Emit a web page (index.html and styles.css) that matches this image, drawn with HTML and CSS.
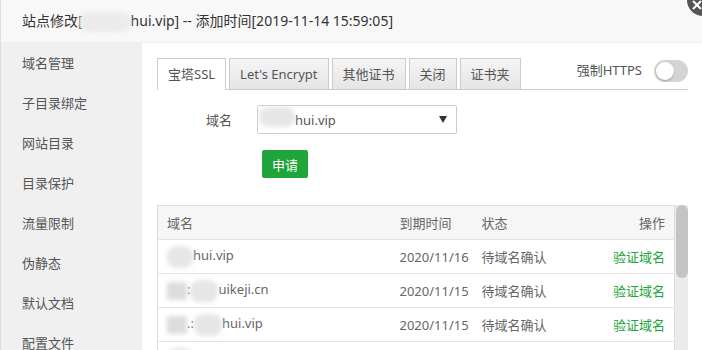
FILE: index.html
```html
<!DOCTYPE html>
<html lang="zh-CN">
<head>
  <meta charset="UTF-8">
  <title>站点修改</title>
  <link rel="stylesheet" href="styles.css">
</head>
<body>
  <div class="layer">
    <div class="layer-title">站点修改[<span class="blur blur-title"></span>hui.vip] -- 添加时间[2019-11-14 15:59:05]</div>
    <a class="layer-close">
      <svg width="12" height="12" viewBox="0 0 12 12"><path d="M2 2L10 10M10 2L2 10" stroke="#fff" stroke-width="2"/></svg>
    </a>
    <div class="layer-body">
      <ul class="side-menu">
        <li>域名管理</li>
        <li>子目录绑定</li>
        <li>网站目录</li>
        <li>目录保护</li>
        <li>流量限制</li>
        <li>伪静态</li>
        <li>默认文档</li>
        <li>配置文件</li>
      </ul>
      <div class="main">
        <div class="tab-bar">
          <div class="tabs">
            <span class="tab on">宝塔SSL</span>
            <span class="tab">Let's Encrypt</span>
            <span class="tab">其他证书</span>
            <span class="tab">关闭</span>
            <span class="tab">证书夹</span>
          </div>
          <div class="force-https">
            <span>强制HTTPS</span>
            <span class="switch"><i></i></span>
          </div>
        </div>

        <div class="form-line">
          <label>域名</label>
          <div class="select-box">
            <span><span class="blur blur-select"></span>hui.vip</span>
            <span class="arrow"></span>
          </div>
        </div>
        <div class="form-line btn-line">
          <button class="btn-apply">申请</button>
        </div>

        <div class="table-wrap">
          <div class="table-box">
            <table class="cert-table">
              <colgroup>
                <col class="col-name">
                <col class="col-date">
                <col class="col-status">
                <col>
              </colgroup>
              <thead>
                <tr><th>域名</th><th>到期时间</th><th>状态</th><th class="op">操作</th></tr>
              </thead>
              <tbody>
                <tr><td><span class="blur blur-a"></span>hui.vip</td><td>2020/11/16</td><td>待域名确认</td><td class="op"><a>验证域名</a></td></tr>
                <tr><td><span class="blur blur-b"></span>:<span class="blur blur-c"></span>uikeji.cn</td><td>2020/11/15</td><td>待域名确认</td><td class="op"><a>验证域名</a></td></tr>
                <tr><td><span class="blur blur-b"></span>.:<span class="blur blur-c"></span>hui.vip</td><td>2020/11/15</td><td>待域名确认</td><td class="op"><a>验证域名</a></td></tr>
                <tr><td><span class="blur blur-a"></span>hui.vip</td><td>2020/11/14</td><td>待域名确认</td><td class="op"><a>验证域名</a></td></tr>
              </tbody>
            </table>
          </div>
          <div class="scrollbar"><div class="thumb"></div></div>
        </div>
      </div>
    </div>
  </div>
</body>
</html>
```

FILE: styles.css
```css
* {
  box-sizing: border-box;
}
html, body {
  margin: 0;
  height: 100%;
  overflow: hidden;
}
body {
  font-family: "Noto Sans", "Noto Sans CJK SC", sans-serif;
  font-size: 13px;
  color: #555;
  background: #fff;
}
.layer {
  position: relative;
  height: 100vh;
  display: flex;
  flex-direction: column;
  border-left: 1px solid #ddd;
}
.layer-title {
  height: 43px;
  line-height: 42px;
  padding-left: 21px;
  font-size: 14px;
  color: #333;
  background: #f8f8f8;
  border-bottom: 1px solid #eee;
}
.layer-close {
  position: absolute;
  left: 686px;
  top: -16px;
  width: 32px;
  height: 32px;
  border-radius: 50%;
  background: #555;
  display: flex;
  align-items: flex-end;
  justify-content: flex-start;
  padding: 0 0 5px 4px;
}
.blur {
  display: inline-block;
  vertical-align: middle;
  background: #e6e6e6;
  border-radius: 9px;
  filter: blur(2px);
}
.blur-title {
  width: 52px;
  height: 20px;
  margin-left: -4px;
  background: #ebebeb;
}
.blur-select {
  width: 36px;
  height: 20px;
  margin: -8px 0 0 -2px;
}
.blur-a {
  width: 26px;
  height: 22px;
}
.blur-b {
  width: 20px;
  height: 18px;
  background: #ddd;
  border-radius: 2px;
}
.blur-c {
  width: 28px;
  height: 22px;
}

.layer-body {
  flex: 1;
  min-height: 0;
  display: flex;
}
.side-menu {
  width: 141px;
  margin: 0;
  padding: 0;
  list-style: none;
  background: #f0f0f0;
}
.side-menu li {
  height: 40px;
  line-height: 40px;
  padding-left: 21px;
  color: #555;
}
.main {
  flex: 1;
  min-width: 0;
  display: flex;
  flex-direction: column;
  padding: 15px 14px 0 15px;
}

.tab-bar {
  display: flex;
  justify-content: space-between;
  align-items: flex-start;
  border-bottom: 1px solid #ccc;
}
.tabs {
  display: flex;
  gap: 3px;
}
.tab {
  height: 31px;
  line-height: 30px;
  padding: 0 10px;
  margin-bottom: -1px;
  border: 1px solid #ccc;
  border-bottom: none;
  background: linear-gradient(#f5f5f5, #e5e5e5);
  color: #555;
  cursor: pointer;
}
.tab.on {
  height: 32px;
  background: #fff;
}
.force-https {
  display: flex;
  align-items: center;
  gap: 12px;
  margin-top: 2px;
}
.force-https span:first-child {
  margin-top: -3px;
}
.switch {
  width: 34px;
  height: 22px;
  border-radius: 11px;
  background: #d4d4d4;
  display: flex;
  align-items: center;
  padding-left: 2px;
}
.switch i {
  width: 18px;
  height: 18px;
  border-radius: 50%;
  background: #fff;
  box-shadow: 0 1px 2px rgba(0,0,0,0.25);
}

.form-line {
  display: flex;
  align-items: center;
  margin-top: 15px;
}
.form-line label {
  width: 75px;
  text-align: right;
  margin-right: 25px;
  color: #555;
}
.select-box {
  width: 200px;
  height: 29px;
  border: 1px solid #ccc;
  border-radius: 2px;
  display: flex;
  justify-content: space-between;
  align-items: center;
  padding: 0 9px 0 3px;
  color: #555;
}
.select-box .arrow {
  width: 0;
  height: 0;
  border-left: 4px solid transparent;
  border-right: 4px solid transparent;
  border-top: 7px solid #333;
}
.btn-line {
  margin-top: 16px;
  padding-left: 105px;
}
.btn-apply {
  width: 46px;
  height: 28px;
  border: none;
  border-radius: 2px;
  background: #20a53a;
  color: #fff;
  font-family: inherit;
  font-size: 13px;
  cursor: pointer;
}

.table-wrap {
  flex: 1;
  min-height: 0;
  margin-top: 27px;
  display: flex;
  overflow: hidden;
}
.table-box {
  flex: 1;
  min-width: 0;
}
.scrollbar {
  width: 13px;
  background: #ebebeb;
  padding-left: 1px;
}
.scrollbar .thumb {
  height: 73px;
  background: #c4c4c4;
  border-radius: 6px;
}
.cert-table {
  width: 100%;
  table-layout: fixed;
  border-collapse: collapse;
  border: 1px solid #ddd;
}
.col-name {
  width: 233px;
}
.col-date {
  width: 82px;
}
.col-status {
  width: 100px;
}
.cert-table th,
.cert-table td {
  height: 34px;
  padding: 0 0 0 9px;
  text-align: left;
  font-weight: normal;
  color: #666;
  border-bottom: 1px solid #e4e4e4;
  white-space: nowrap;
  overflow: hidden;
}
.cert-table th {
  background: #f6f6f6;
}
.cert-table .op {
  text-align: right;
  padding-right: 9px;
}
.cert-table a {
  color: #20a53a;
  cursor: pointer;
}
```
